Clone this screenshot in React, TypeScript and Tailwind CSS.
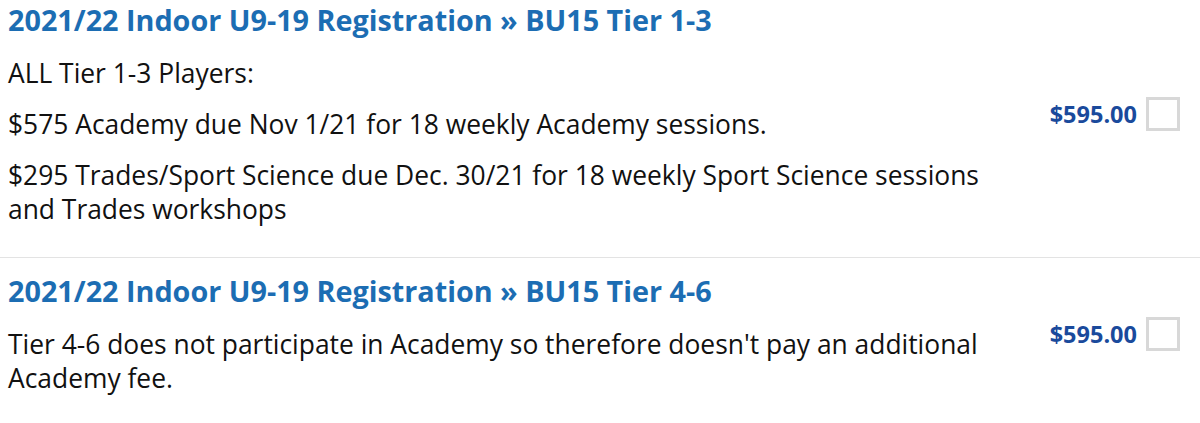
export default function App() {
  const items = [
    {
      title: "2021/22 Indoor U9-19 Registration » BU15 Tier 1-3",
      paras: [
        "ALL Tier 1-3 Players:",
        "$575 Academy due Nov 1/21 for 18 weekly Academy sessions.",
        "$295 Trades/Sport Science due Dec. 30/21 for 18 weekly Sport Science sessions and Trades workshops",
      ],
      price: "$595.00",
      priceTop: "mt-[59px]",
    },
    {
      title: "2021/22 Indoor U9-19 Registration » BU15 Tier 4-6",
      paras: [
        "Tier 4-6 does not participate in Academy so therefore doesn't pay an additional Academy fee.",
      ],
      price: "$595.00",
      priceTop: "mt-[8px]",
    },
  ];
  return (
    <div
      className="w-[1200px] h-[423px] overflow-hidden bg-white"
      style={{ fontFamily: '"Open Sans", "Liberation Sans", sans-serif' }}
    >
      {items.map((it, i) => (
        <div
          key={i}
          className={
            i === 0
              ? "border-b border-[#e3e3e3] pt-[1px] pb-[31px] px-[8px]"
              : "pt-[14px] px-[8px]"
          }
        >
          <h2 className="text-[28.75px] leading-[37px] font-bold text-[#1c6db3]">
            {it.title}
          </h2>
          <div className="flex">
            <div className="w-[1000px] text-[26.4px] leading-[34px] text-[#111]">
              {it.paras.map((p, j) => (
                <p key={j} className="mt-[17px] first:mt-[18px]">
                  {p}
                </p>
              ))}
            </div>
            <div
              className={`flex-1 flex items-center justify-end gap-[9px] pr-[12px] self-start ${it.priceTop}`}
            >
              <span className="text-[23.5px] leading-[34px] font-bold text-[#1a4a9c]">
                {it.price}
              </span>
              <span className="block w-[34px] h-[34px] border-[3px] border-[#d8d8d8] bg-white" />
            </div>
          </div>
        </div>
      ))}
    </div>
  );
}
